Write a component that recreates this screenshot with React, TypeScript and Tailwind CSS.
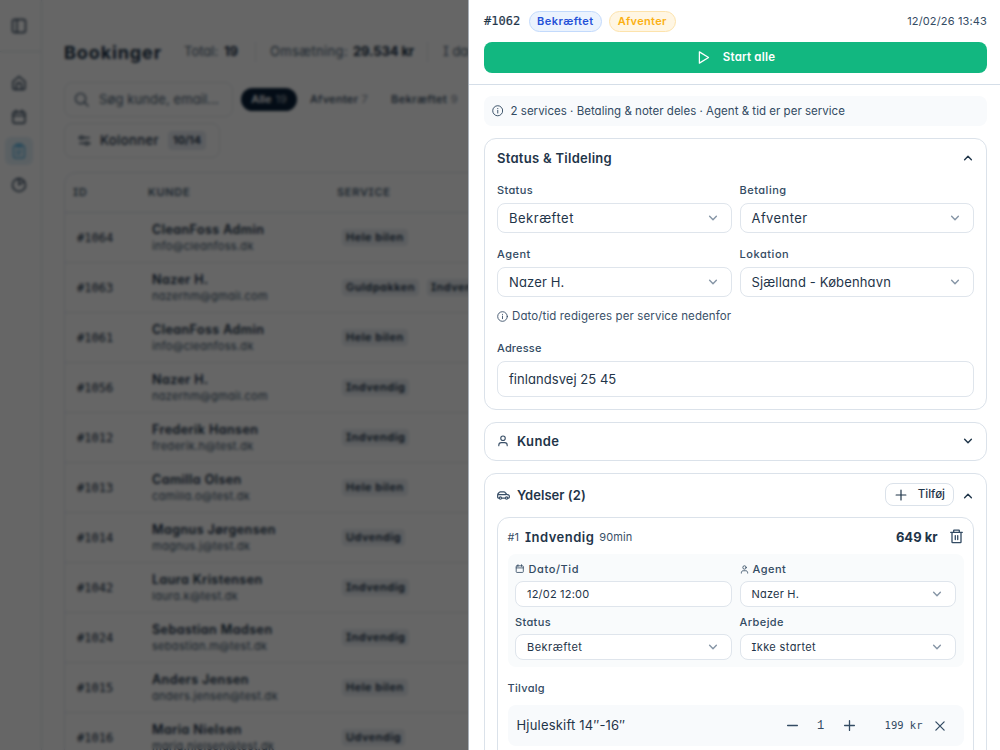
import type { ReactNode } from "react";

interface IconProps {
  className?: string;
}

function Svg({ className = "size-4", children, sw = 1.4 }: IconProps & { children: ReactNode; sw?: number }) {
  return (
    <svg
      viewBox="0 0 16 16"
      className={`shrink-0 ${className}`}
      fill="none"
      stroke="currentColor"
      strokeWidth={sw}
      strokeLinecap="round"
      strokeLinejoin="round"
    >
      {children}
    </svg>
  );
}

const InfoIcon = ({ className }: IconProps) => (
  <Svg className={className} sw={1.3}>
    <circle cx="8" cy="8" r="7" />
    <path d="M8 7.4v3.8M8 4.8v.3" />
  </Svg>
);

const PlayIcon = ({ className }: IconProps) => (
  <Svg className={className} sw={1.3}>
    <path d="M3.6 2v12L13.400 8z" />
  </Svg>
);

const UserIcon = ({ className }: IconProps) => (
  <Svg className={className} sw={1.5}>
    <circle cx="8" cy="4.4" r="3" />
    <path d="M2.4 14.4v-.6c0-2.2 1.4-3.6 3.4-3.6h4.4c2 0 3.4 1.4 3.4 3.6v.6" />
  </Svg>
);

const CarIcon = ({ className }: IconProps) => (
  <Svg className={className} sw={1.5}>
    <path d="M2.4 11.2H1.8c-.6 0-1-.4-1-1V7.4c0-1 .4-1.6 1-2.2l1-1c.4-.4.8-.6 1.4-.6h4.300c.6 0 1.100.2 1.500.7L12 6.600l2 .6c.8.3 1.200.8 1.200 1.600v1.400c0 .6-.4 1-1 1h-.6M6 11.200h4M1.200 6.900H11" />
    <circle cx="4.2" cy="11.2" r="1.4" />
    <circle cx="11.8" cy="11.2" r="1.4" />
  </Svg>
);

const CalendarIcon = ({ className }: IconProps) => (
  <Svg className={className}>
    <rect x="2" y="3" width="12" height="11.2" rx="1.4" />
    <path d="M2 6.600h12M5 1.200V4M11 1.200V4" />
  </Svg>
);

const TrashIcon = ({ className }: IconProps) => (
  <Svg className={className} sw={1.4}>
    <path d="M1.800 3.500h12.400M3.200 3.700v10.200c0 .4.2.7.6.7h8.400c.4 0 .6-.3.6-.7V3.700M5 3.300V1.500c0-.3.2-.4.4-.4h5.200c.2 0 .4.1.4.4v1.800M6.700 7v4.300M9.300 7v4.300" />
  </Svg>
);

const ChevronIcon = ({ className = "", up }: IconProps & { up?: boolean }) => (
  <Svg className={`size-3 ${className}`} sw={1.9}>
    <path d={up ? "M3.500 10.200 8 5.800l4.500 4.400" : "M3.500 5.800l4.500 4.400 4.500-4.400"} />
  </Svg>
);

interface FieldProps {
  label: ReactNode;
  value: string;
  labelClass?: string;
  valueClass?: string;
  small?: boolean;
  select?: boolean;
}

function Field({ label, value, labelClass = "", valueClass = "", small, select = true }: FieldProps) {
  return (
    <div className="min-w-0 flex-1">
      <div className={`flex h-4 items-center gap-1 text-[11px] font-medium text-[#334b63] ${labelClass}`}>{label}</div>
      <div
        className={`flex items-center justify-between rounded-lg border border-[#dfe5ec] bg-white pl-[11px] text-[#1f3549] ${
          small ? "mt-1 h-[26px] pr-3 text-[11px]" : "mt-[5px] h-[30px] pr-3 text-[13px]"
        }`}
      >
        <span className={`${small ? "" : "pt-[1.500px]"} ${valueClass}`}>{value}</span>
        {select && <ChevronIcon className="text-[#8695a6]" />}
      </div>
    </div>
  );
}

const rows = [
  { id: "#1064", name: "CleanFoss Admin", mail: "info@cleanfoss.dk", tags: ["Hele bilen"] },
  { id: "#1063", name: "Nazer H.", mail: "nazerhm@gmail.com", tags: ["Guldpakken", "Indvendig"] },
  { id: "#1061", name: "CleanFoss Admin", mail: "info@cleanfoss.dk", tags: ["Hele bilen"] },
  { id: "#1056", name: "Nazer H.", mail: "nazerhm@gmail.com", tags: ["Indvendig"] },
  { id: "#1012", name: "Frederik Hansen", mail: "frederik.h@test.dk", tags: ["Indvendig"] },
  { id: "#1013", name: "Camilla Olsen", mail: "camilla.o@test.dk", tags: ["Hele bilen"] },
  { id: "#1014", name: "Magnus Jørgensen", mail: "magnus.j@test.dk", tags: ["Udvendig"] },
  { id: "#1042", name: "Laura Kristensen", mail: "laura.k@test.dk", tags: ["Indvendig"] },
  { id: "#1024", name: "Sebastian Madsen", mail: "sebastian.m@test.dk", tags: ["Indvendig"] },
  { id: "#1015", name: "Anders Jensen", mail: "anders.jensen@test.dk", tags: ["Hele bilen"] },
  { id: "#1016", name: "Maria Nielsen", mail: "maria.nielsen@test.dk", tags: ["Udvendig"] },
];

function Sidebar() {
  return (
    <aside className="flex w-[42px] shrink-0 flex-col border-r border-[#dfe8ec] text-[#2a3f55]">
      <div className="flex h-[52px] items-center border-b border-[#dfe8ec] pl-[11px]">
        <Svg>
          <rect x="1.5" y="1.5" width="13" height="13" rx="2" />
          <path d="M6 1.500v13" />
        </Svg>
      </div>
      <nav className="flex flex-col gap-[6px] pt-[17px] pl-[5px]">
        <div className="flex size-7 items-center justify-center">
          <Svg>
            <path d="M2 6.500 8 1.500l6 5v6.500c0 .8-.6 1.500-1.500 1.500h-9c-.9 0-1.500-.7-1.500-1.500zM5.500 14V10c0-3 5-3 5 0v4" />
          </Svg>
        </div>
        <div className="flex size-7 items-center justify-center">
          <CalendarIcon />
        </div>
        <div className="flex size-7 items-center justify-center rounded-md bg-[#e3f1f8] text-[#5fb4e0]">
          <Svg>
            <rect x="2.5" y="2.5" width="11" height="12.5" rx="2" />
            <path d="M5.500 1h5v3h-5zM5.500 8h5M5.500 11h4" />
          </Svg>
        </div>
        <div className="flex size-7 items-center justify-center">
          <Svg>
            <circle cx="8" cy="8" r="6.5" />
            <path d="M8 1.500V8l5-3.500" />
          </Svg>
        </div>
      </nav>
    </aside>
  );
}

function BookingList() {
  return (
    <main className="w-[900px] shrink-0 pl-[22px] text-[#1c3247]">
      <div className="flex h-[104px] items-center whitespace-nowrap text-[13px]">
        <h1 className="w-[120px] text-[18px] font-bold tracking-[0.89px]">Bookinger</h1>
        <span className="w-10 text-[#4a5f74]">Total:</span>
        <b className="w-[31px]">19</b>
        <span className="w-[15px] border-l border-[#e2e8ee]">&nbsp;</span>
        <span className="w-[83px] tracking-[0.34px] text-[#4a5f74]">Omsætning:</span>
        <b className="w-[74px] tracking-[-0.1px]">29.534 kr</b>
        <span className="w-[16px] border-l border-[#e2e8ee]">&nbsp;</span>
        <span className="text-[#4a5f74]">I dag:</span>
      </div>

      <div className="-mt-[22px] flex h-[35px] items-center">
        <div className="flex h-[35px] w-[169px] items-center rounded-lg border border-[#e4ebee] pl-[9px] text-[13px] text-[#4a5f74]">
          <Svg className="size-[15px]">
            <circle cx="7" cy="7" r="5.5" />
            <path d="m11 11 4 4" />
          </Svg>
          <span className="ml-[10px] tracking-[0.12px]">Søg kunde, email...</span>
        </div>
        <div className="ml-2 flex h-[23px] w-[56px] items-center justify-center gap-1 rounded-full bg-[#0a2038] text-[11px] font-semibold text-white">
          Alle <span className="font-normal opacity-60">19</span>
        </div>
        <div className="ml-[13px] w-[81px] text-[11px] font-medium tracking-[0.35px] text-[#2f465c]">
          Afventer <span className="font-normal opacity-60">7</span>
        </div>
        <div className="text-[11px] font-medium tracking-[0.5px] text-[#2f465c]">
          Bekræftet <span className="font-normal opacity-60">9</span>
        </div>
      </div>

      <div className="mt-[6px] flex h-[35px] w-[156px] items-center rounded-lg border border-[#e4ebee] pl-[13px] text-[13px] font-medium">
        <Svg className="size-[13px]">
          <path d="M1 4.500h1.500M7 4.500h7M2 11.500h6M13 11.500h2" />
          <circle cx="4.5" cy="4.5" r="2" />
          <circle cx="10.8" cy="11.5" r="2" />
        </Svg>
        <span className="ml-[9px] tracking-[0.41px]">Kolonner</span>
        <span className="ml-[9px] rounded bg-[#e4e9f0] px-[5px] py-px text-[11px] font-semibold">10/14</span>
      </div>

      <div className="mt-[14px] rounded-t-xl border border-[#e0e5ef]">
        <div className="flex h-10 items-center border-b border-[#dce2ec] pl-2 text-[11px] font-semibold tracking-[0.7px] text-[#4a5f74]">
          <span className="w-[75px]">ID</span>
          <span className="w-[189px]">KUNDE</span>
          <span>SERVICE</span>
        </div>
        {rows.map((r) => (
          <div key={r.id} className="flex h-[50px] items-center border-b border-[#e2e9ec] pl-3">
            <span className="w-[75px] font-['DejaVu_Sans_Mono','Liberation_Mono',monospace] text-[12px]">{r.id}</span>
            <div className="w-[190px]">
              <div className="h-[17px] text-[12.500px] leading-[17px] font-semibold tracking-[0.45px]">{r.name}</div>
              <div className="h-4 text-[11px] leading-4 tracking-[0.3px] text-[#40566b]">{r.mail}</div>
            </div>
            <div className="flex gap-2">
              {r.tags.map((t) => (
                <span key={t} className="rounded bg-[#e6ebf0] px-1 text-[11px] leading-[17px] font-semibold tracking-[0.5px]">
                  {t}
                </span>
              ))}
            </div>
          </div>
        ))}
      </div>
    </main>
  );
}

function StatusCard() {
  return (
    <section className="h-[271.500px] rounded-xl border border-[#dbe2ea] px-3">
      <div className="flex h-[38px] items-center justify-between text-[#1f3549]">
        <h2 className="pt-px text-[13px] font-semibold tracking-[0.28px]">Status & Tildeling</h2>
        <ChevronIcon up />
      </div>
      <div className="mt-[5px] flex gap-2">
        <Field label="Status" value="Bekræftet" labelClass="tracking-[0.35px]" valueClass="tracking-[0.51px]" />
        <Field label="Betaling" value="Afventer" labelClass="tracking-[0.5px]" valueClass="tracking-[0.41px]" />
      </div>
      <div className="mt-[13px] flex gap-2">
        <Field label="Agent" value="Nazer H." labelClass="tracking-[0.48px]" valueClass="tracking-[0.15px]" />
        <Field label="Lokation" value="Sjælland - København" labelClass="tracking-[0.55px]" valueClass="tracking-[0.15px]" />
      </div>
      <div className="mt-[11px] flex h-4 items-center gap-1 text-[11.500px] text-[#3a5068]">
        <InfoIcon className="size-[11px]" />
        <span className="pt-px tracking-[0.11px]">Dato/tid redigeres per service nedenfor</span>
      </div>
      <div className="mt-4 h-4 text-[11px] leading-4 font-medium tracking-[0.17px] text-[#334b63]">Adresse</div>
      <div className="mt-[5px] flex h-9 items-center rounded-lg border border-[#dfe5ec] pt-[1.500px] pl-[11px] text-[13px] tracking-[0.05px] text-[#1f3549]">
        finlandsvej 25 45
      </div>
    </section>
  );
}

function ServiceItem() {
  return (
    <div className="h-[400px] rounded-xl border border-[#dbe2ea] px-[9.500px]">
      <div className="flex h-9 items-center pt-[3px] text-[11px] text-[#3a5068]">
        <span>#1</span>
        <h3 className="ml-[6px] text-[13px] font-semibold tracking-[0.5px] text-[#1f3549]">Indvendig</h3>
        <span className="ml-[5px] tracking-[0.1px]">90min</span>
        <b className="ml-auto text-[13px] text-[#1f3549]">649 kr</b>
        <TrashIcon className="mt-[-3px] ml-[11px] size-[15px] text-[#334b63]" />
      </div>

      <div className="h-[113px] rounded-lg bg-[#f9fbfc] px-[7.500px] pt-[7px]">
        <div className="flex gap-2">
          <Field
            small
            select={false}
            label={
              <>
                <CalendarIcon className="size-[9.500px]" />
                <span className="tracking-[0.6px]">Dato/Tid</span>
              </>
            }
            value="12/02 12:00"
            valueClass="tracking-[0.2px]"
          />
          <Field
            small
            label={
              <>
                <UserIcon className="size-[9px]" />
                <span className="tracking-[0.48px]">Agent</span>
              </>
            }
            value="Nazer H."
            valueClass="tracking-[0.2px]"
          />
        </div>
        <div className="mt-[7px] flex gap-2">
          <Field small label="Status" value="Bekræftet" labelClass="tracking-[0.35px]" valueClass="tracking-[0.48px]" />
          <Field small label="Arbejde" value="Ikke startet" labelClass="tracking-[0.42px]" valueClass="tracking-[0.38px]" />
        </div>
      </div>

      <div className="mt-[13px] h-4 text-[11px] leading-4 font-medium tracking-[0.31px] text-[#334b63]">Tilvalg</div>
      <div className="mt-[9px] flex h-[41px] items-center rounded-lg bg-[#f8fafc] pl-[9px] text-[#334b63]">
        <span className="mr-auto pt-px text-[13px] tracking-[0.2px] text-[#1f3549]">Hjuleskift 14″-16″</span>
        <Svg className="size-[13px]" sw={1.6}>
          <path d="M2 8h12" />
        </Svg>
        <span className="w-[44px] text-center font-['Liberation_Mono',monospace] text-[12px]">1</span>
        <Svg className="size-[13px]" sw={1.6}>
          <path d="M2 8h12M8 2v12" />
        </Svg>
        <span className="ml-[29px] font-['DejaVu_Sans_Mono','Liberation_Mono',monospace] text-[10.500px]">199 kr</span>
        <Svg className="mr-[18px] ml-[11px] size-3" sw={1.7}>
          <path d="M2.500 2.500l11 11M13.500 2.500l-11 11" />
        </Svg>
      </div>
    </div>
  );
}

function BookingPanel() {
  return (
    <div className="absolute inset-y-0 right-0 flex w-[532px] flex-col overflow-hidden border-l border-[#a9b0b8] bg-white">
      <header className="h-[85px] shrink-0 border-b border-[#d5dee8] pr-[13px] pl-[15px]">
        <div className="flex h-[42px] items-center">
          <span className="w-[45px] font-['DejaVu_Sans_Mono','Liberation_Mono',monospace] text-[12px] text-[#1f3549] [-webkit-text-stroke:0.2px]">
            #1062
          </span>
          <span className="flex h-[21px] items-center rounded-full border border-[#c3dafc] bg-[#ebf3fe] px-[7px] text-[11px] font-semibold tracking-[0.48px] text-[#2450d8]">
            Bekræftet
          </span>
          <span className="ml-[7px] flex h-[21px] items-center rounded-full border border-[#fde3ac] bg-[#fff6e3] px-2 text-[11px] font-semibold tracking-[0.35px] text-[#fbb012]">
            Afventer
          </span>
          <span className="ml-auto text-[11px] tracking-[0.15px] text-[#334b63]">12/02/26 13:43</span>
        </div>
        <button className="flex h-[31px] w-full items-center justify-center gap-3 rounded-lg bg-[#12b780] text-[11.500px] font-semibold tracking-[0.2px] text-white">
          <PlayIcon className="size-[15px]" />
          <span className="pt-px">Start alle</span>
        </button>
      </header>

      <div className="flex flex-col gap-3 pt-[11px] pr-[13px] pl-[15px]">
        <div className="flex h-[30px] items-center gap-[7.500px] rounded-lg bg-[#f8fafc] pl-[7.500px] text-[11.500px] text-[#334b63]">
          <InfoIcon className="size-[11.500px]" />
          <span className="pt-[1.500px] tracking-[0.02px]">2 services · Betaling & noter deles · Agent & tid er per service</span>
        </div>

        <StatusCard />

        <section className="flex h-[39.500px] items-center rounded-xl border border-[#dbe2ea] px-3 text-[#1f3549]">
          <UserIcon className="size-3 text-[#3a5068]" />
          <h2 className="ml-2 text-[13px] font-semibold tracking-[0.36px]">Kunde</h2>
          <ChevronIcon className="ml-auto" />
        </section>

        <section className="rounded-xl border border-[#dbe2ea] px-3">
          <div className="flex h-[43px] items-center text-[#1f3549]">
            <CarIcon className="size-[13px] text-[#3a5068]" />
            <h2 className="ml-[7px] text-[13px] font-semibold tracking-[0.05px]">Ydelser (2)</h2>
            <button className="mt-[-2px] ml-auto flex h-[23px] items-center gap-[11px] rounded-lg border border-[#dbe2ea] pr-[8px] pl-[9px] text-[11.500px] font-medium">
              <Svg className="size-3" sw={1.6}>
                <path d="M1.500 8h13M8 1.500v13" />
              </Svg>
              Tilføj
            </button>
            <ChevronIcon up className="ml-2" />
          </div>
          <ServiceItem />
        </section>
      </div>
    </div>
  );
}

export default function App() {
  return (
    <div className="relative h-[750px] w-[1000px] overflow-hidden bg-white font-['Inter','Liberation_Sans',sans-serif] [font-feature-settings:'cv11','cv08']">
      <div className="flex h-full">
        <Sidebar />
        <BookingList />
      </div>
      <div className="absolute inset-0 bg-black/60 backdrop-blur-[1.700px]" />
      <BookingPanel />
    </div>
  );
}
